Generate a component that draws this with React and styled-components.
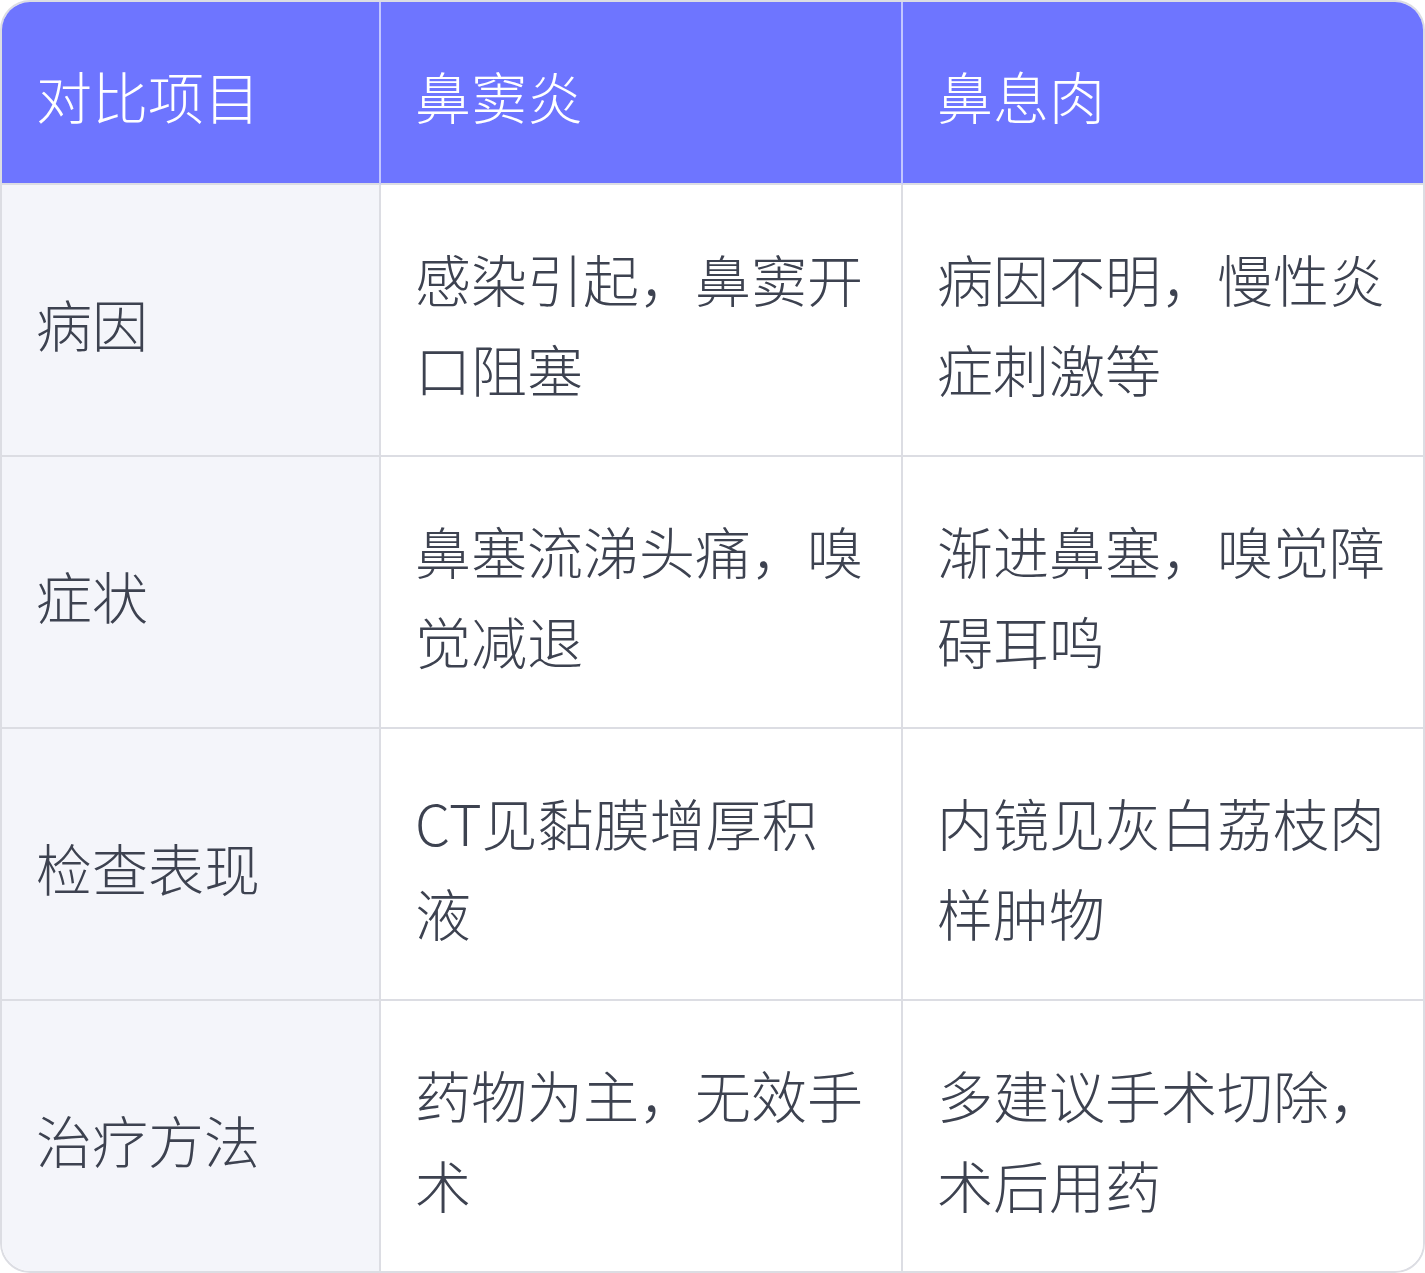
import React from 'react';
import styled, { createGlobalStyle } from 'styled-components';

const GlobalStyle = createGlobalStyle`
  body {
    margin: 0;
    background: #ffffff;
    font-family: "Noto Sans CJK SC", "Noto Sans", sans-serif;
  }
`;

// --- Styled Components ---
const Frame = styled.div`
  width: 1425px;
  box-sizing: border-box;
  border: 2px solid #dcdde3;
  border-radius: 30px;
  overflow: hidden;
`;

const Table = styled.table`
  width: 100%;
  border-collapse: separate;
  border-spacing: 0;
  table-layout: fixed;
`;

const HeadCell = styled.th`
  background: #6e75ff;
  color: #ffffff;
  font-weight: 300;
  font-size: 56px;
  line-height: 90px;
  text-align: left;
  padding: 48px 34px 43px;
  border-bottom: 2px solid #dcdde3;
  border-right: 2px solid #c3c6ff;

  &:last-child {
    border-right: none;
  }
`;

const Cell = styled.td`
  background: ${({ $label }) => ($label ? '#f4f5fa' : '#ffffff')};
  color: #3d4250;
  font-weight: 300;
  font-size: 56px;
  line-height: 90px;
  padding: 48px 34px 42px;
  vertical-align: middle;
  border-bottom: 2px solid #dcdde3;
  border-right: 2px solid #dcdde3;
  word-break: break-all;

  &:last-child {
    border-right: none;
  }

  tr:last-child > & {
    border-bottom: none;
  }
`;

const rows = [
  ['病因', '感染引起，鼻窦开口阻塞', '病因不明，慢性炎症刺激等'],
  ['症状', '鼻塞流涕头痛，嗅觉减退', '渐进鼻塞，嗅觉障碍耳鸣'],
  ['检查表现', 'CT见黏膜增厚积液', '内镜见灰白荔枝肉样肿物'],
  ['治疗方法', '药物为主，无效手术', '多建议手术切除，术后用药'],
];

// --- Component ---
export default function App() {
  return (
    <>
      <GlobalStyle />
      <Frame>
        <Table>
          <colgroup>
            <col style={{ width: 379 }} />
            <col style={{ width: 522 }} />
            <col />
          </colgroup>
          <thead>
            <tr>
              <HeadCell>对比项目</HeadCell>
              <HeadCell>鼻窦炎</HeadCell>
              <HeadCell>鼻息肉</HeadCell>
            </tr>
          </thead>
          <tbody>
            {rows.map(r => (
              <tr key={r[0]}>
                <Cell $label>{r[0]}</Cell>
                <Cell>{r[1]}</Cell>
                <Cell>{r[2]}</Cell>
              </tr>
            ))}
          </tbody>
        </Table>
      </Frame>
    </>
  );
}
